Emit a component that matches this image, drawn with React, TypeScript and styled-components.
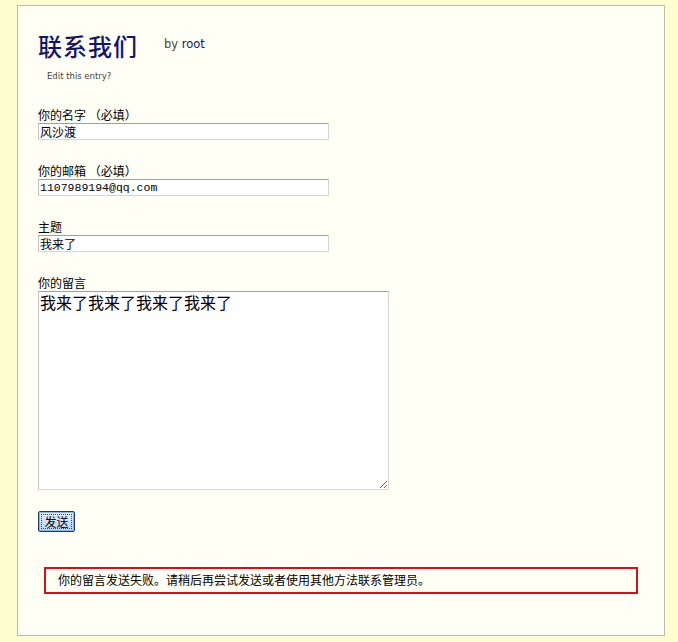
import React from 'react';
import styled, { createGlobalStyle } from 'styled-components';

const GlobalStyle = createGlobalStyle`
  html, body {
    margin: 0;
    padding: 0;
    background: #fffdd2;
  }
  body {
    font-family: "Noto Sans CJK SC", "DejaVu Sans", sans-serif;
    font-size: 12px;
    color: #000;
  }
`;

const fields = [
  { id: 'name', label: '你的名字 （必填）', value: '风沙渡', mono: false },
  { id: 'email', label: '你的邮箱 （必填）', value: '1107989194@qq.com', mono: true },
  { id: 'subject', label: '主题', value: '我来了', mono: false },
];

const App: React.FC = () => {
  return (
    <>
      <GlobalStyle />
      <Page>
        <Panel>
          <Header>
            <Title>联系我们</Title>
            <Byline>
              by <span className="author">root</span>
            </Byline>
          </Header>
          <EditLink>Edit this entry?</EditLink>
          <Form onSubmit={(e) => e.preventDefault()}>
            {fields.map((field) => (
              <Field key={`field--${field.id}`}>
                <label htmlFor={field.id}>{field.label}</label>
                <TextInput
                  id={field.id}
                  $mono={field.mono}
                  defaultValue={field.value}
                />
              </Field>
            ))}
            <Field>
              <label htmlFor="message">你的留言</label>
              <MessageBox id="message" defaultValue="我来了我来了我来了我来了" />
            </Field>
            <SendButton type="submit">发送</SendButton>
          </Form>
          <ErrorBox>你的留言发送失败。请稍后再尝试发送或者使用其他方法联系管理员。</ErrorBox>
        </Panel>
      </Page>
    </>
  );
};

const Page = styled.div`
  padding: 5px 13px 6px 17px;
  height: 642px;
  box-sizing: border-box;
`;

const Panel = styled.div`
  box-sizing: border-box;
  width: 648px;
  height: 631px;
  background: #fffff6;
  border: 1px solid #c4bc98;
  padding: 24px 26px 0 20px;
`;

const Header = styled.div`
  display: flex;
  align-items: baseline;
  gap: 26px;
`;

const Title = styled.h1`
  margin: 0;
  font-family: "Noto Sans CJK SC", serif;
  font-size: 24px;
  font-weight: 500;
  line-height: 32px;
  color: #12156e;
  letter-spacing: 1px;
`;

const Byline = styled.span`
  font-family: "DejaVu Sans", sans-serif;
  font-size: 11.5px;
  color: #444;
  position: relative;
  top: -8px;

  .author {
    color: #12156e;
  }
`;

const EditLink = styled.div`
  margin: 9px 0 0 9px;
  font-family: "DejaVu Sans", sans-serif;
  font-size: 8.5px;
  color: #444;
`;

const Form = styled.form`
  display: flex;
  flex-direction: column;
  align-items: flex-start;
  margin-top: 26px;
`;

const Field = styled.div`
  display: flex;
  flex-direction: column;
  margin-bottom: 23px;

  label {
    font-size: 12px;
    line-height: 16px;
    height: 16px;
  }
`;

const TextInput = styled.input<{ $mono: boolean }>`
  box-sizing: border-box;
  width: 291px;
  height: 17px;
  margin: 0;
  padding: 0 1px;
  border: 1px solid #d6d6d6;
  border-top-color: #a0a0a0;
  border-left-color: #c4c4c4;
  background: #fff;
  font-family: ${(p) =>
    p.$mono ? '"Liberation Mono", monospace' : '"Noto Sans CJK SC", sans-serif'};
  font-size: ${(p) => (p.$mono ? '11.5px' : '12px')};
  color: #000;
  outline: none;
`;

const MessageBox = styled.textarea`
  box-sizing: border-box;
  width: 351px;
  height: 199px;
  margin: 0;
  padding: 0 1px;
  border: 1px solid #d6d6d6;
  border-top-color: #a0a0a0;
  border-left-color: #c4c4c4;
  background: #fff;
  font-family: "Noto Sans CJK SC", sans-serif;
  font-size: 16px;
  line-height: 20px;
  color: #000;
  outline: none;
`;

const SendButton = styled.button`
  box-sizing: border-box;
  width: 37px;
  height: 21px;
  margin: -2px 0 0 0;
  padding: 0;
  border: 1px solid #1e3a68;
  border-radius: 2px;
  background: linear-gradient(#e4eef9, #b9d2ee);
  box-shadow: inset 0 0 0 1px #8fb4e0;
  font-family: "Noto Sans CJK SC", sans-serif;
  font-size: 12px;
  color: #000;
  cursor: pointer;
  outline: 1px dotted #444;
  outline-offset: -4px;
`;

const ErrorBox = styled.div`
  box-sizing: border-box;
  width: 594px;
  height: 27px;
  margin: 35px 0 0 6px;
  padding: 0 0 0 12px;
  border: 2px solid #d2121b;
  font-size: 12px;
  line-height: 22px;
  color: #000;
`;

export default App;
